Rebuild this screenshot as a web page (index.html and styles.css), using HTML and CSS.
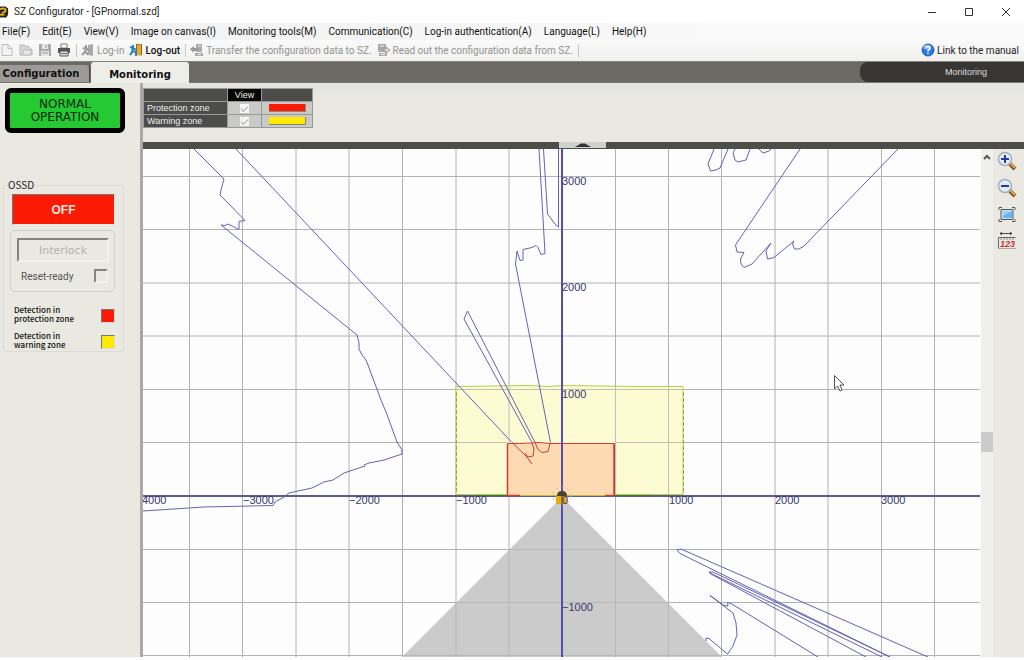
FILE: index.html
```html
<!DOCTYPE html>
<html lang="en">
<head>
<meta charset="utf-8">
<title>SZ Configurator - [GPnormal.szd]</title>
<link rel="stylesheet" href="styles.css">
</head>
<body>
<div class="window">
  <header class="titlebar">
    <svg class="app-icon" viewBox="0 0 10 14"><path d="M0 1h6l3 2v7l-2 3H0z" fill="#2a2519"/><path d="M0 4q4-2 6 0q1 3-4 4" fill="none" stroke="#e8b51c" stroke-width="2"/><path d="M0 9h5v2H0z" fill="#e8b51c"/></svg>
    <h1 class="title">SZ Configurator - [GPnormal.szd]</h1>
    <div class="window-buttons">
      <button aria-label="Minimize"><svg viewBox="0 0 10 10"><path d="M1 5.500h8"/></svg></button>
      <button aria-label="Maximize"><svg viewBox="0 0 10 10"><path d="M1.500 1.500h7v7h-7z"/></svg></button>
      <button aria-label="Close"><svg viewBox="0 0 10 10"><path d="M1 1l8 8M9 1L1 9"/></svg></button>
    </div>
  </header>

  <nav class="menubar">
    <button>File(F)</button>
    <button>Edit(E)</button>
    <button>View(V)</button>
    <button>Image on canvas(I)</button>
    <button>Monitoring tools(M)</button>
    <button>Communication(C)</button>
    <button>Log-in authentication(A)</button>
    <button>Language(L)</button>
    <button>Help(H)</button>
  </nav>

  <div class="toolbar">
    <button class="tool icon-only" aria-label="New" disabled><svg viewBox="0 0 14 14"><path d="M2 1.500h6l4 4v7H2z" fill="#f2f2f2" stroke="#bdbdbd"/><path d="M8 1.500v4h4" fill="none" stroke="#bdbdbd"/></svg></button>
    <button class="tool icon-only" aria-label="Open" disabled><svg viewBox="0 0 14 14"><path d="M1 2h4l1 1h3l4 4v5H1z" fill="#d6d6d6" stroke="#bcbcbc"/><path d="M3 12l2-5h8l-2 5z" fill="#e6e6e6" stroke="#bcbcbc"/></svg></button>
    <button class="tool icon-only" aria-label="Save" disabled><svg viewBox="0 0 14 14"><path d="M1 1h11l1 1v11H1z" fill="#aaa"/><path d="M4 1h6v5H4zM3 8h8v5H3z" fill="#e4e4e4"/><path d="M8 2v3M4 10h6" stroke="#999"/></svg></button>
    <button class="tool icon-only" aria-label="Print"><svg viewBox="0 0 14 14"><path d="M4 1h6v4H4z" fill="#fff" stroke="#777"/><path d="M1 5h12v5H1z" fill="#555"/><path d="M3 8h8v5H3z" fill="#ddd" stroke="#555"/><path d="M4 10.500h6" stroke="#777"/></svg></button>
    <span class="separator"></span>
    <button class="tool" disabled><svg viewBox="0 0 14 14"><path d="M7 2l5-1v12l-5-1z" fill="#aaa"/><path d="M5 2v3M5 4L2 6M5 5l3 3M5 6L4 9l-3 3M5 9l2 3" stroke="#999" stroke-width="2" fill="none"/></svg>Log-in</button>
    <button class="tool strong"><svg viewBox="0 0 14 14"><path d="M7 1h6v11H7z" fill="#8c6418"/><path d="M8 2l4-1v12l-4-1z" fill="#eba72b"/><path d="M4 2v3M1 4l3 1 3 2M4 5L3 9l-2 3M3 8l4 1v4" stroke="#2482bd" stroke-width="2" fill="none"/></svg>Log-out</button>
    <span class="separator"></span>
    <button class="tool" disabled><svg viewBox="0 0 14 14"><path d="M6 1h6v8H6zM5 10h8v3H5z" fill="#aaa"/><path d="M0 6l4-3v2h4v3H4v2z" fill="#999"/><path d="M8 3h3M8 11.500h3" stroke="#eee"/></svg>Transfer the configuration data to SZ.</button>
    <button class="tool" disabled><svg viewBox="0 0 14 14"><path d="M1 1h8v8H1zM2 10h8v3H2z" fill="#aaa"/><path d="M3 3h4M4 11.500h4" stroke="#eee"/><path d="M6 6h3V4l4 3-4 3V8H6z" fill="#ddd" stroke="#999"/></svg>Read out the configuration data from SZ.</button>
    <span class="separator"></span>
    <a class="manual" href="#manual"><svg viewBox="0 0 14 14"><circle cx="7" cy="7" r="6" fill="#2b75e4" stroke="#1c5cc0"/><ellipse cx="6" cy="4" rx="4" ry="2.500" fill="#78adf5"/><path d="M5 5.500Q5 3.500 7 3.500T9 5.500Q9 6.500 7 7.500v1M7 9.500v1.500" fill="none" stroke="#fff" stroke-width="1.500"/></svg>Link to the manual</a>
  </div>

  <div class="tabbar">
    <button class="tab">Configuration</button>
    <button class="tab active">Monitoring</button>
    <div class="mode">Monitoring</div>
  </div>

  <div class="body">
    <aside class="side">
      <div class="status">NORMAL<br>OPERATION</div>
      <fieldset class="ossd">
        <legend>OSSD</legend>
        <div class="ossd-state">OFF</div>
        <div class="interlock-box">
          <button class="interlock" disabled>Interlock</button>
          <label class="reset">Reset-ready <input type="checkbox" class="lamp" disabled></label>
        </div>
        <div class="detect"><span>Detection in<br>protection zone</span><i class="led red"></i></div>
        <div class="detect"><span>Detection in<br>warning zone</span><i class="led yellow"></i></div>
      </fieldset>
    </aside>

    <main class="main">
      <section class="zones">
        <table class="zone-table">
          <thead><tr><th class="name"></th><th class="view">View</th><th class="color"></th></tr></thead>
          <tbody>
            <tr><th class="name"><label for="pz">Protection zone</label></th><td><input id="pz" type="checkbox" checked disabled></td><td><i class="swatch red"></i></td></tr>
            <tr><th class="name"><label for="wz">Warning zone</label></th><td><input id="wz" type="checkbox" checked disabled></td><td><i class="swatch yellow"></i></td></tr>
          </tbody>
        </table>
      </section>
      <div class="splitter"><button aria-label="Collapse panel"><svg viewBox="0 0 16 4"><path d="M0 4l6-3.500h4L16 4z" fill="#333"/></svg></button></div>
      <div class="stage">
        <svg class="canvas" viewBox="143 149 838 508" preserveAspectRatio="xMidYMid slice">
          <path class="grid" d="M189.500 149v508M242.500 149v508M296 149v508M349 149v508M402.500 149v508M456 149v508M509 149v508M615.500 149v508M668.500 149v508M721.500 149v508M775 149v508M828 149v508M881.500 149v508M934.500 149v508M143 176.500h837M143 229.500h837M143 283h837M143 336h837M143 389.500h837M143 442.500h837M143 549.500h837M143 602.500h837M143 655.500h837"/>
          <path class="blind" d="M562 497L402 657H722z"/>
          <path class="grid faint" d="M456 603v54M509 550v107M615.500 550v107M668.500 603v54M509 549.500h106M456 602.500h212M404 655.500h316"/>
          <path class="warning" d="M456 386.500l72-1 20 1 14-1 80 1h41V494.500H456z"/>
          <path class="warning-dash" d="M456.500 392v102M683.500 392v102"/>
          <path class="protection" d="M507.500 495.500V443.500l12 0 20-1 10 1 65 0V495.500z"/>
          <path class="grid faint" d="M509 386v57M615.500 386v108M668.500 386v108M456 389.500h227M456 442.500h51M615 442.500h68"/>
          <path class="axis-x" d="M143 496h837"/>
          <path class="axis-y" d="M562 149v508"/>
          <path d="M475 495.500h33M615 495.500h36" stroke="#38753d"/>
          <path d="M520 495.500h85" stroke="#c4bb3d"/>
          <path d="M507 495.500h13M605 495.500h10M507.500 444v51M614 444v51" stroke="#d8392d" stroke-width="1.500"/>
          <g class="scan">
            <path d="M194 149L224 179L221 190 220 195 245 220.500 239 221.500V229.500L228 224 225 225.500 221 225 357 335 359 343 359 349 362 355 366 360 368 365 381 400 386 412 397 442 402 450V454L384 460 369 463 364 465 365 466 344 473 333 480 324 482 312 488 289 493 284 497 275 502 273 505.500 204 507 143 511"/>
            <path d="M236 149L512 442.500"/>
            <path d="M532 442.500L464 319 467.500 311 535 442.500"/>
            <path d="M550.500 442.500L515.500 264 517 251 520 260.500 523 260V249.500L532 247.500 536 245.500 538 247.500 541 254.500 545 253.500 543.500 227 539 149M543.500 149L547.500 214 555 224 558.500 227V149"/>
            <path d="M714 149L708 164 710.500 171 716 170 720 168 728 149M735 149l-2 4 2 7 3 2 8-2 4-11M759 149l4 4 6-2 2-2M800 149L735.500 245 737 252 744 252.500 740.500 259 741 264 744 267.500 752 264 771 243 766 251 767.500 259 774 257.500 794 241 792.500 244 794.500 249 799 249 804 246 898 149"/>
            <path d="M928 657L681 549 677 550 680 553.500 890 657M882 657L711 573.500 709 572 713 572 890 657M866 657L711 574 709 572.500"/>
            <path d="M818 657L731 603.500 727.500 602.500 728 606 724 605.500 710 595.500 733 613 736 623 737 635 733 646 727.500 654 709 638.500 706 638 706 641"/>
          </g>
          <path class="hit" d="M512 442.500L526 456 532 464M525 453l3 4 5-1 1-7-2-6M535 442.500l3 7 4 3 6-1 2-8"/>
          <g>
            <circle cx="562" cy="496" r="9" fill="none" stroke="#bba" stroke-dasharray="2 4"/>
            <path d="M556 495h11v9h-11z" fill="#e7aa12"/><path d="M557 496q0-5 5-5t5 5z" fill="#49402e"/><path d="M562 495v9" stroke="#36306c" stroke-width="1"/>
          </g>
          <g class="labels">
            <text x="562" y="185">3000</text><text x="562" y="291">2000</text><text x="562" y="398">1000</text><text x="562" y="611">−1000</text>
            <text x="142" y="504">4000</text><text x="243" y="504">−3000</text><text x="349" y="504">−2000</text><text x="456" y="504">−1000</text><text x="562" y="504">0</text><text x="669" y="504">1000</text><text x="775" y="504">2000</text><text x="881" y="504">3000</text>
          </g>
          <path d="M834.500 375.500v13.500l3-3 2.500 5 2-1-2-5h4z" fill="#fff" stroke="#555"/>
        </svg>
        <div class="scrollbar">
          <button aria-label="Scroll up"><svg viewBox="0 0 8 6"><path d="M1 5l3-3 3 3" fill="none" stroke="#555" stroke-width="2"/></svg></button>
          <span class="thumb"></span>
        </div>
        <div class="canvas-tools">
          <button aria-label="Zoom in"><svg viewBox="0 0 20 20"><path d="M12 12l6 6" stroke="#76542c" stroke-width="4"/><path d="M13 12l5 5" stroke="#e0a446" stroke-width="2"/><circle cx="8" cy="8" r="6.500" fill="#e2eefb" stroke="#a6adb8" stroke-width="1.500"/><path d="M4 8h8M8 4v8" stroke="#2438a8" stroke-width="2"/></svg></button>
          <button aria-label="Zoom out"><svg viewBox="0 0 20 20"><path d="M12 12l6 6" stroke="#76542c" stroke-width="4"/><path d="M13 12l5 5" stroke="#e0a446" stroke-width="2"/><circle cx="8" cy="8" r="6.500" fill="#e2eefb" stroke="#a6adb8" stroke-width="1.500"/><path d="M4 8h8" stroke="#2438a8" stroke-width="2"/></svg></button>
          <button aria-label="Fit to window"><svg viewBox="0 0 20 20"><path d="M2 5V2.500h3M15 2.500h3V5M18 14v2.500h-3M5 16.500H2V14" fill="none" stroke="#555"/><path d="M4 4.500h12v10H4z" fill="#c9e2f7" stroke="#555"/><path d="M6 6h9v7H6z" fill="#6eb4ef"/><path d="M6 6h9l-9 5z" fill="#9bcdf6"/></svg></button>
          <button aria-label="Show dimensions"><svg viewBox="0 0 20 20"><path d="M3 1.500h12M5 0L3 1.500 5 3M13 0l2 1.500L13 3" fill="none" stroke="#444"/><path d="M1.500 16.500v-11h17" fill="none" stroke="#666"/><path d="M2 16.500h17" stroke="#aaa"/><path d="M4 6v2M7 6v2M10 6v2M13 6v2M16 6v2" stroke="#888"/><text x="3" y="15" class="ruler-num">123</text></svg></button>
        </div>
      </div>
    </main>
  </div>
</div>
</body>
</html>
```
FILE: styles.css
```css
* { box-sizing: border-box; }
html, body { height: 100%; }
body { margin: 0; background: #fdfdfd; color: #222; font-family: Roboto, "Noto Sans", sans-serif; font-size: 10px; }
button { margin: 0; padding: 0; border: 0; background: none; color: inherit; font: inherit; white-space: nowrap; }
svg { display: block; }
.window { display: flex; flex-direction: column; height: 100%; padding-bottom: 3px; overflow: hidden; }

.titlebar { display: flex; align-items: center; height: 23px; flex: none; gap: 5px; background: #fff; }
.app-icon { width: 9px; height: 14px; }
.title { margin: 0; font-size: 10px; font-weight: 400; }
.window-buttons { display: flex; margin-left: auto; }
.window-buttons button { display: flex; align-items: center; justify-content: center; width: 37px; height: 22px; }
.window-buttons svg { width: 10px; height: 10px; fill: none; stroke: #333; }

.menubar { display: flex; align-items: center; gap: 12px; height: 17px; flex: none; padding-left: 2px; background: linear-gradient(90deg, #f0f0f0, #fafafa 80%); color: #111; line-height: 16px; }

.toolbar { display: flex; align-items: center; height: 21px; flex: none; padding: 0 5px 1px 0; background: linear-gradient(#fafafa, #f0f0ee); }
.toolbar svg { width: 14px; height: 14px; flex: none; }
.tool { display: flex; align-items: center; gap: 2px; margin-right: 5px; }
.tool:disabled { color: #929292; }
.strong { font-weight: 500; color: #111; }
.icon-only { margin-right: 5px; }
.separator { width: 1px; height: 13px; background: #c4c4c4; margin: 0 4px 0 0; }
.manual { display: flex; align-items: center; gap: 2px; margin-left: auto; color: #222; text-decoration: none; }

.tabbar { display: flex; align-items: flex-end; height: 22px; flex: none; background: #6b6963; border-top: 1px solid #888680; border-bottom: 1px solid #777; }
.tab { height: 17px; width: 90px; margin-right: 1px; padding-right: 7px; border-right: 1px solid #444; border-radius: 0 3px 0 0; background: #9c9b97; color: #111; font-family: "DejaVu Sans", sans-serif; font-size: 10px; font-weight: 700; }
.tab.active { align-self: stretch; height: 21px; width: 98px; padding: 3px 0 0; border: 0; border-radius: 3px 3px 0 0; background: #eeeee9; }
.mode { align-self: stretch; display: flex; align-items: center; justify-content: flex-end; width: 164px; margin-left: auto; padding-right: 37px; border-radius: 8px 0 0 8px; background: #373632; color: #ddd; font-family: "Liberation Sans", Arial, sans-serif; font-size: 9px; line-height: 16px; }

.body { display: flex; flex: 1; min-height: 0; background: #e9e9e2; }
.side { width: 143px; flex: none; padding: 5px 0 0 5px; border-right: 3px solid #aaa9a5; background: #e9e9e2; }
.status { display: flex; align-items: center; justify-content: center; width: 120px; height: 45px; border: 5px solid #000; border-radius: 6px; background: #25c932; color: #052a09; font-family: "DejaVu Sans", sans-serif; font-size: 12px; line-height: 13px; text-align: center; }
.ossd { width: 121px; min-width: 0; margin: 45px 0 0 -2px; padding: 2px 8px 0 8px; border: 1px solid #dcdcd6; border-radius: 3px; font-family: "Noto Sans CJK JP", sans-serif; }
.ossd legend { margin-left: -4px; padding: 0; font-size: 10px; line-height: 14px; }
.ossd-state { height: 31px; margin-bottom: 5px; border: 1px solid; border-color: #777 #e9e9e2 #e9e9e2 #777; background: #fb1a04; color: #ffe6dc; font-family: "Liberation Sans", Arial, sans-serif; font-size: 12px; font-weight: 700; line-height: 30px; text-align: center; }
.interlock-box { height: 62px; margin: 0 0 0 -2px; padding: 7px 6px 0; border: 1px solid #cfcfc9; border-radius: 5px; }
.interlock { display: block; width: 92px; height: 24px; border: 2px solid #858580; border-right-color: #f2f2ed; border-bottom-color: #f2f2ed; color: #b2b2ac; font-family: "DejaVu Sans", sans-serif; font-size: 11px; }
.reset { display: flex; align-items: center; justify-content: space-between; height: 28px; padding: 0 0 0 4px; color: #555; font-family: Roboto, "Noto Sans", sans-serif; }
.lamp { appearance: none; width: 14px; height: 14px; margin: 0; border: 2px solid #858580; border-right-color: #f2f2ed; border-bottom-color: #f2f2ed; }
.detect { display: flex; align-items: flex-end; justify-content: space-between; margin: 0 0 8px 2px; font-size: 8px; line-height: 9px; color: #111; font-weight: 500; }
.interlock-box + .detect { margin-top: 13px; }
.detect:last-child { margin-bottom: 2px; }
.led { width: 14px; height: 14px; border: 1px solid #777; border-right-color: #ddd; border-bottom-color: #ddd; }
.red { background: #fb1a04; }
.yellow { background: #ffe900; }

.main { display: flex; flex-direction: column; flex: 1; min-width: 0; }
.zones { height: 59px; flex: none; padding-top: 5px; background: linear-gradient(#e4e4e1 5px, #e9e9e2 15px); }
.zone-table { border-collapse: collapse; font-family: "Liberation Sans", Arial, sans-serif; font-size: 9px; line-height: 12px; color: #eee; }
.zone-table th, .zone-table td { height: 13px; padding: 0; border: 1px solid #999; font-weight: 400; }
.zone-table th { background: #4c4c4b; text-align: left; }
.zone-table .name { width: 84px; padding-left: 3px; }
.zone-table .view { width: 34px; background: #050505; text-align: center; }
.zone-table .color { width: 51px; }
.zone-table td { background: #c9c9c8; }
.zone-table input { appearance: none; display: block; width: 9px; height: 9px; margin: 0 auto; background: #f5f5f5; }
.zone-table input:checked::before { content: ""; display: block; width: 6px; height: 3px; margin: 0 auto; border: solid #aaa; border-width: 0 0 1px 1px; transform: translateY(2px) rotate(-45deg); }
.swatch { display: block; width: 37px; height: 8px; margin: 0 auto; border-right: 1px solid #887; border-bottom: 1px solid #887; }

.splitter { display: flex; height: 7px; flex: none; padding-left: 416px; background: #4d4d4a; }
.splitter button { display: flex; align-items: center; justify-content: center; width: 47px; height: 6px; background: #d0d0cc; }
.splitter svg { width: 16px; height: 4px; }
.stage { display: flex; flex: 1; min-height: 0; }
.canvas { flex: 1; min-width: 0; height: 100%; background: #fdfdfd; }
.grid { fill: none; stroke: #b2b2b2; stroke-width: 1; }
.faint { opacity: 0.8; }
.blind { fill: #cbcbcb; }
.warning { fill: #fdfbd2; stroke: #b2d24c; stroke-width: 1; }
.warning-dash { stroke: #8fb040; stroke-dasharray: 4 2; }
.protection { fill: #fddab2; stroke: #d8392d; stroke-width: 1; }
.axis-x { stroke: #5d5b94; stroke-width: 2; }
.axis-y { stroke: #5250ac; stroke-width: 2; }
.scan { fill: none; stroke: #6462b8; stroke-width: 1; }
.hit { fill: none; stroke: #c83e2c; stroke-width: 1; }
.labels { fill: #39376f; font-family: "Liberation Sans", Arial, sans-serif; font-size: 11px; }
.scrollbar { display: flex; flex-direction: column; width: 12px; flex: none; background: #efefee; }
.scrollbar button { display: flex; align-items: center; justify-content: center; height: 16px; }
.scrollbar svg { width: 8px; height: 6px; }
.thumb { height: 20px; margin-top: 267px; background: #cbcbcb; }
.canvas-tools { display: flex; flex-direction: column; align-items: center; gap: 7px; width: 31px; flex: none; padding: 2px 3px 0 0; background: #e9e9e2; }
.canvas-tools button, .canvas-tools svg { width: 20px; height: 20px; }
.ruler-num { fill: #d03030; font-family: "Liberation Sans", Arial, sans-serif; font-size: 9px; font-weight: 700; font-style: italic; }
```
